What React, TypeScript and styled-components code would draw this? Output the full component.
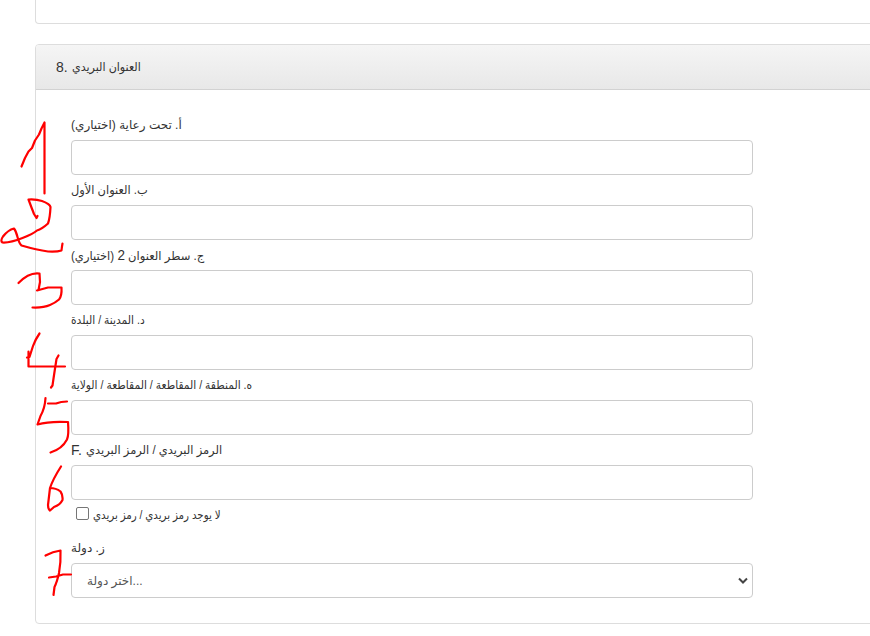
import React from "react";
import styled, { createGlobalStyle } from "styled-components";

const GlobalStyle = createGlobalStyle`
  *, *::before, *::after { box-sizing: border-box; }
  html, body { margin: 0; background: #fff; overflow: hidden; }
  body { color: #333; font: 14px/20px "Liberation Sans", "DejaVu Sans", sans-serif; }
`;

const Page = styled.main`
  position: relative;
  width: 870px;
  height: 636px;
  padding-left: 35px;
  overflow: hidden;
`;

const Panel = styled.section`
  width: 900px;
  border: 1px solid #ddd;
  border-radius: 4px;
  background: #fff;
`;

const PreviousPanel = styled(Panel)`
  height: 24px;
  margin-bottom: 20px;
  border-top: 0;
  border-radius: 0 0 4px 4px;
`;

const AddressPanel = styled(Panel)`
  height: 580px;
`;

const PanelHeading = styled.header`
  display: flex;
  align-items: center;
  height: 45px;
  padding-left: 20px;
  border-bottom: 1px solid #d2d2d2;
  border-radius: 3px 3px 0 0;
  background: linear-gradient(#f5f5f5, #e8e8e8);
`;

const PanelBody = styled.div`
  display: flex;
  flex-direction: column;
  width: 717px;
  padding: 20px 0 0 35px;
`;

const Field = styled.div`
  display: flex;
  flex-direction: column;
  height: 65px;
`;

const Caption = styled.label`
  display: flex;
  align-items: center;
  height: 30px;
  white-space: pre;
`;

const Arabic = styled.span<{ $scale?: number }>`
  display: inline-block;
  font-size: 12px;
  white-space: pre;
  transform: scaleX(${(p) => p.$scale ?? 1});
  transform-origin: left center;
`;

const Digit = styled.span`
  font-size: 14px;
`;

const TextInput = styled.input`
  width: 682px;
  height: 35px;
  padding: 6px 12px;
  border: 1px solid #ccc;
  border-radius: 4px;
  background: #fff;
  font: inherit;
`;

const CheckRow = styled.label`
  display: flex;
  align-items: center;
  gap: 4px;
  height: 33px;
  padding: 0 0 4px 5px;
`;

const Checkbox = styled.input`
  width: 13px;
  height: 13px;
  margin: 0 0 2px;
  appearance: none;
  border: 1px solid #767676;
  border-radius: 2px;
  background: #fff;
`;

const CountrySelect = styled.button`
  display: flex;
  align-items: center;
  justify-content: space-between;
  width: 682px;
  height: 35px;
  padding: 0 3px 0 15px;
  border: 1px solid #ccc;
  border-radius: 4px;
  background: #fff;
  color: #555;
  font: inherit;
`;

const Ink = styled.svg`
  position: absolute;
  inset: 0;
  pointer-events: none;
`;

const fields = [
  { prefix: "", text: "أ. تحت رعاية (اختياري)", scale: 1 },
  { prefix: "", text: "ب. العنوان الأول", scale: 0.95 },
  { prefix: "", text: "ج. سطر العنوان 2 (اختياري)", scale: 0.963 },
  { prefix: "", text: "د. المدينة / البلدة", scale: 0.89 },
  { prefix: "", text: "ه. المنطقة / المقاطعة / المقاطعة / الولاية", scale: 0.89 },
  { prefix: "F. ", text: "الرمز البريدي / الرمز البريدي", scale: 0.955 },
];

const withDigits = (text: string) =>
  text.split(/(\d+)/).map((part, i) => (i % 2 ? <Digit key={i}>{part}</Digit> : part));

const strokes = [
  "M21.5 166.5 L25 158 28.5 151.5 32 148 35 140.5 39 134.5 41.5 128.5 44.5 122.5 V193.5",
  "M37.5 216 L36.5 218 34 214 31.5 207.5 28.5 199.5 Q36 199 42 201 Q50 204 50.5 207 Q50 218 48 223.5 Q42 229 37 230.5 Q33 234 22.5 238 Q10 243 2.5 242.5 Q0 241 3 236.5 Q8 230 14 228.5 Q16 231 17.5 237 Q19 243 21.5 245.5 Q37 250 48 251.5 Q57 252 61.5 250.5 Q62 246 62.5 243.5",
  "M18.5 283 Q29 272 39.5 273.5 L40 282 38.5 290 37 290.5 48 287.5 H61.5 Q62 296 59 299.5 Q55 303 50 305 Q43 308 32.5 307.5",
  "M39.5 333.5 Q35 340 33 346 L29.5 357 27 357.5 M28.5 351.5 V366.5 H65 M58.5 355.5 L56.5 359 Q54 375 52.5 385.5 L51 387.5",
  "M45.5 398 Q45 408 40.5 416 L37.5 424.5 Q49 421 68 422 Q69 435 67 439.5 Q62 449 50.5 452.5 M48 403.5 L56 403.5 Q61 401.5 67 401.5",
  "M61 466.5 Q53 479 50 488 L48 505 Q48 509 50 510.5 L54 507 Q60 505 62.5 500 Q63 495 60.5 491.5 Q56 488 50 488",
  "M45.5 555.5 Q53 551.5 60.5 550.5 Q61 562 59 573 Q57 582 54.5 587 L53.5 595 M49 577.5 L56 576.5 63 574.5 71 574.5",
];

export default function App() {
  return (
    <Page>
      <GlobalStyle />
      <PreviousPanel />
      <AddressPanel>
        <PanelHeading>
          <Caption as="span">8. <Arabic $scale={0.925}>العنوان البريدي</Arabic></Caption>
        </PanelHeading>
        <PanelBody>
          {fields.map((f) => (
            <Field key={f.text}>
              <Caption>{f.prefix}<Arabic $scale={f.scale}>{withDigits(f.text)}</Arabic></Caption>
              <TextInput aria-label={f.text} />
            </Field>
          ))}
          <CheckRow>
            <Checkbox type="checkbox" />
            <Arabic $scale={0.855}>لا يوجد رمز بريدي / رمز بريدي</Arabic>
          </CheckRow>
          <Field>
            <Caption><Arabic>ز. دولة</Arabic></Caption>
            <CountrySelect type="button">
              <Arabic>اختر دولة...</Arabic>
              <svg width="12" height="10" viewBox="0 0 12 10" fill="none" stroke="#444" strokeWidth="2">
                <path d="M2 2.5 L6 6.5 L10 2.5" />
              </svg>
            </CountrySelect>
          </Field>
        </PanelBody>
      </AddressPanel>
      <Ink width="870" height="636" viewBox="0 0 870 636" fill="none" stroke="#f00" strokeWidth="2.2" strokeLinecap="round" strokeLinejoin="round">
        {strokes.map((d) => <path key={d} d={d} />)}
      </Ink>
    </Page>
  );
}
